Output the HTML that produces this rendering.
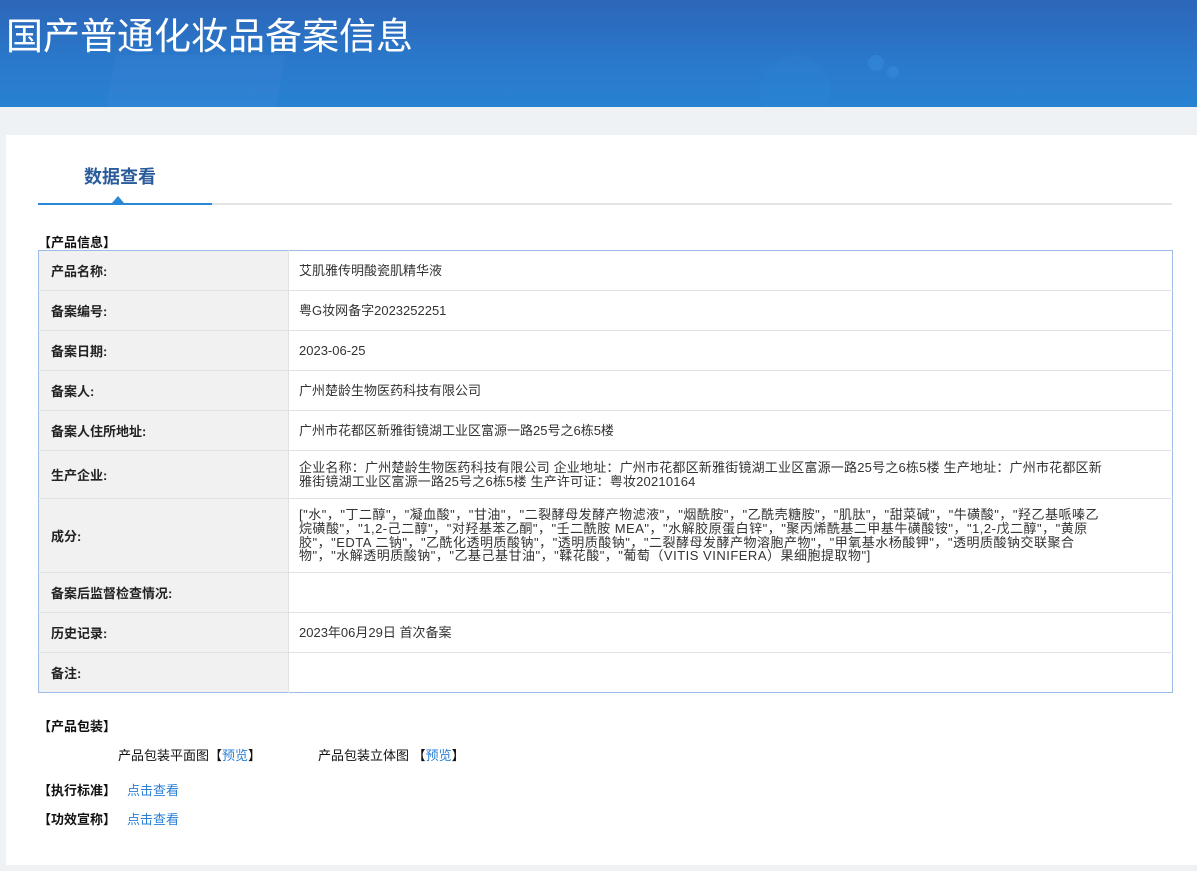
<!DOCTYPE html>
<html><head><meta charset="utf-8"><style>
*{margin:0;padding:0;box-sizing:border-box}
body{width:1197px;height:871px;background:#eef2f5;font-family:"Liberation Sans","Noto Sans CJK SC",sans-serif;font-size:13px;color:#333;position:relative;overflow:hidden}
.hdr{position:absolute;left:0;top:0;width:1197px;height:107px;background:linear-gradient(180deg,#2c66b8 0%,#2a79cc 60%,#2882d2 100%);overflow:hidden}
.hdr .b1{position:absolute;left:110px;top:55px;width:170px;height:60px;background:rgba(90,150,230,.12);transform:skewX(-10deg)}
.hdr .c{position:absolute;border-radius:50%;background:rgba(60,150,230,.35)}
.hdr h1{position:absolute;left:6px;top:6px;font-size:37px;font-weight:normal;color:#fff;font-family:"Noto Sans CJK SC",sans-serif}
.panel{position:absolute;left:6px;top:135px;width:1191px;height:730px;background:#fff}
.tab{position:absolute;left:84px;top:163px;font-size:18px;font-weight:bold;color:#2a5b9b}
.line{position:absolute;left:38px;top:203px;width:1134px;height:2px;background:#e4e4e4}
.line2{position:absolute;left:38px;top:203px;width:174px;height:2px;background:#2a88d8}
.tri{position:absolute;left:112px;top:196px;width:0;height:0;border-left:6px solid transparent;border-right:6px solid transparent;border-bottom:7px solid #2a88d8}
.sec{position:absolute;font-weight:bold;color:#111;font-size:13px}
table{position:absolute;left:38px;top:250px;width:1135px;border-collapse:collapse;border:1px solid #9dbbe6}
td{border-top:1px solid #e2e2e2;vertical-align:middle;font-size:13px}
td.l{width:250px;background:#f1f1f1;font-weight:bold;color:#222;padding-left:12px;border-right:1px solid #e2e2e2}
td.v{padding:0 40px 0 10px;color:#333;line-height:13.7px;white-space:nowrap}
td.ing{letter-spacing:0.5px}
td.ent{letter-spacing:0.2px}
a{color:#2a7fd4;text-decoration:none}
</style></head><body>
<div class="hdr"><div class="b1"></div><div class="c" style="left:760px;top:55px;width:70px;height:70px;opacity:.3"></div><div class="c" style="left:868px;top:55px;width:16px;height:16px"></div><div class="c" style="left:887px;top:66px;width:12px;height:12px"></div><h1>国产普通化妆品备案信息</h1></div>
<div class="panel"></div>
<div class="tab">数据查看</div>
<div class="line"></div><div class="line2"></div><div class="tri"></div>
<div class="sec" style="left:38px;top:232px">【产品信息】</div>
<table>
<tr style="height:40px"><td class="l" style="border-top:0">产品名称:</td><td class="v" style="border-top:0">艾肌雅传明酸瓷肌精华液</td></tr>
<tr style="height:40px"><td class="l">备案编号:</td><td class="v">粤G妆网备字2023252251</td></tr>
<tr style="height:40px"><td class="l">备案日期:</td><td class="v">2023-06-25</td></tr>
<tr style="height:40px"><td class="l">备案人:</td><td class="v">广州楚龄生物医药科技有限公司</td></tr>
<tr style="height:40px"><td class="l">备案人住所地址:</td><td class="v">广州市花都区新雅街镜湖工业区富源一路25号之6栋5楼</td></tr>
<tr style="height:48px"><td class="l">生产企业:</td><td class="v ent">企业名称：广州楚龄生物医药科技有限公司 企业地址：广州市花都区新雅街镜湖工业区富源一路25号之6栋5楼 生产地址：广州市花都区新<br>雅街镜湖工业区富源一路25号之6栋5楼 生产许可证：粤妆20210164</td></tr>
<tr style="height:74px"><td class="l">成分:</td><td class="v ing">["水"，"丁二醇"，"凝血酸"，"甘油"，"二裂酵母发酵产物滤液"，"烟酰胺"，"乙酰壳糖胺"，"肌肽"，"甜菜碱"，"牛磺酸"，"羟乙基哌嗪乙<br>烷磺酸"，"1,2-己二醇"，"对羟基苯乙酮"，"壬二酰胺 MEA"，"水解胶原蛋白锌"，"聚丙烯酰基二甲基牛磺酸铵"，"1,2-戊二醇"，"黄原<br>胶"，"EDTA 二钠"，"乙酰化透明质酸钠"，"透明质酸钠"，"二裂酵母发酵产物溶胞产物"，"甲氧基水杨酸钾"，"透明质酸钠交联聚合<br>物"，"水解透明质酸钠"，"乙基己基甘油"，"鞣花酸"，"葡萄（VITIS VINIFERA）果细胞提取物"]</td></tr>
<tr style="height:40px"><td class="l">备案后监督检查情况:</td><td class="v"></td></tr>
<tr style="height:40px"><td class="l">历史记录:</td><td class="v">2023年06月29日 首次备案</td></tr>
<tr style="height:40px"><td class="l">备注:</td><td class="v"></td></tr>
</table>
<div class="sec" style="left:38px;top:716px">【产品包装】</div>
<div style="position:absolute;left:118px;top:745px;color:#111">产品包装平面图【<a>预览</a>】</div>
<div style="position:absolute;left:318px;top:745px;color:#111">产品包装立体图 【<a>预览</a>】</div>
<div class="sec" style="left:38px;top:780px">【执行标准】</div><a style="position:absolute;left:127px;top:780px">点击查看</a>
<div class="sec" style="left:38px;top:809px">【功效宣称】</div><a style="position:absolute;left:127px;top:809px">点击查看</a>
</body></html>
